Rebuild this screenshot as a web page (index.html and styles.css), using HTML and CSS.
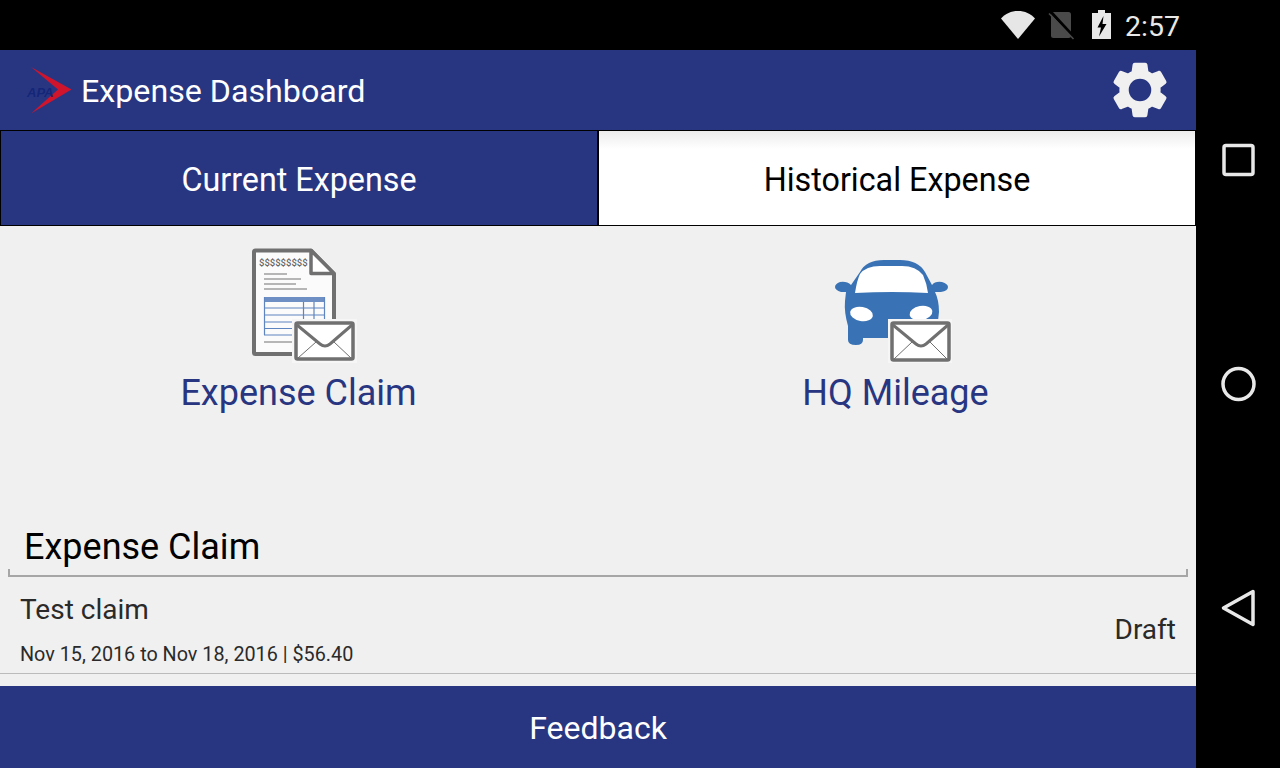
FILE: index.html
```html
<!DOCTYPE html>
<html>
<head>
    <title>Expense Dashboard</title>
    <link rel="stylesheet" href="styles.css">
</head>
<body>
    <div class="device">
        <div class="status-bar">
            <svg class="status-icons" width="112" height="34" viewBox="1000 8 112 34">
                <path d="M1001 18.500C1005.500 13.500 1011 11 1018 11S1030.500 13.500 1035 18.500L1018 39Z" fill="#e6e6e6"/>
                <rect x="1051" y="12" width="20" height="26" rx="2.500" fill="#4a4a4a"/>
                <path d="M1050 11L1074 37" stroke="#000" stroke-width="3" fill="none"/>
                <path d="M1049 13.500L1073.500 39" stroke="#4a4a4a" stroke-width="1.500" fill="none"/>
                <path d="M1098 10H1105V13H1111V39H1092V13H1098Z" fill="#e8e8e8"/>
                <path d="M1103.500 16L1097.500 27.500H1101L1099 36.500L1106.500 24H1102.500Z" fill="#000"/>
            </svg>
            <span class="clock">2:57</span>
        </div>

        <div class="app">
            <header class="app-header">
                <svg class="logo" width="46" height="48" viewBox="26 66 46 48">
                    <path d="M31 67L71.500 89.500L31 113.500L58 89.500Z" fill="#d0142c"/>
                    <text x="27" y="97" class="logo-text">APA</text>
                </svg>
                <h1 class="app-title">Expense Dashboard</h1>
                <svg class="gear" width="66" height="66" viewBox="0 0 24 24">
                    <path fill-rule="evenodd" fill="#f0f0f0" stroke="#f0f0f0" stroke-width="0.600" d="M19.14,12.94c0.04-0.3,0.06-0.61,0.06-0.94c0-0.32-0.02-0.64-0.07-0.94l2.03-1.58c0.18-0.14,0.23-0.41,0.12-0.61l-1.92-3.32c-0.12-0.22-0.37-0.29-0.59-0.22l-2.39,0.96c-0.5-0.38-1.03-0.7-1.62-0.94L14.4,2.81c-0.04-0.24-0.24-0.41-0.48-0.41h-3.84c-0.24,0-0.43,0.17-0.47,0.41L9.25,5.35C8.66,5.59,8.12,5.92,7.63,6.29L5.24,5.33c-0.22-0.08-0.47,0-0.59,0.22L2.74,8.87C2.62,9.08,2.66,9.34,2.86,9.48l2.03,1.58C4.84,11.36,4.8,11.69,4.8,12s0.02,0.64,0.07,0.94l-2.03,1.58c-0.18,0.14-0.23,0.41-0.12,0.61l1.92,3.32c0.12,0.22,0.37,0.29,0.59,0.22l2.39-0.96c0.5,0.38,1.03,0.7,1.62,0.94l0.36,2.54c0.05,0.24,0.24,0.41,0.48,0.41h3.84c0.24,0,0.44-0.17,0.47-0.41l0.36-2.54c0.59-0.24,1.13-0.56,1.62-0.94l2.39,0.96c0.22,0.08,0.47,0,0.59-0.22l1.92-3.32c0.12-0.22,0.07-0.47-0.12-0.61L19.14,12.94z M12,16.400a4.400,4.400 0 1 1 0,-8.800a4.400,4.400 0 1 1 0,8.800z"/>
                </svg>
            </header>

            <div class="tabs">
                <div class="tab tab-active">Current Expense</div>
                <div class="tab tab-plain">Historical Expense</div>
            </div>

            <div class="actions">
                <div class="action">
                    <svg width="116" height="118" viewBox="240 246 116 118">
                        <path d="M254.500 250.500H310L333 274V352.500a1.500 1.500 0 0 1-1.500 1.500H254.500a1.500 1.500 0 0 1-1.500-1.500V252a1.500 1.500 0 0 1 1.500-1.500Z" fill="#fbfbfb" stroke="#707070" stroke-width="4" stroke-linejoin="round"/>
                        <path d="M310 250.500V273.500H333Z" fill="#fff" stroke="#707070" stroke-width="3.500" stroke-linejoin="round"/>
                        <text x="258" y="266" class="doc-money">$$$$$$$$$</text>
                        <path d="M263 274H286M263 279H300M263 284H295M263 289H306M263 342H296" stroke="#a0a0a0" stroke-width="1.500" fill="none"/>
                        <rect x="263" y="297" width="61" height="5" fill="#6d8fc4"/>
                        <path d="M263.500 297V335M302.500 302V335M313 302V335M323.500 297V335M263 308H324M263 315H324M263 322H324M263 328.500H324M263 335H324" stroke="#5f85c0" stroke-width="1.200" fill="none"/>
                        <g transform="translate(295 323)">
                            <rect x="-4" y="-4" width="65" height="44" fill="#f6f6f6"/>
                            <rect width="57" height="36" rx="1.500" fill="#fff" stroke="#707070" stroke-width="3.500"/>
                            <path d="M1 2L24 21Q29 25 34 21L56 2" fill="none" stroke="#707070" stroke-width="3"/>
                            <path d="M2 35L20 19M55 35L38 19" fill="none" stroke="#707070" stroke-width="1"/>
                        </g>
                    </svg>
                    <span class="action-label">Expense Claim</span>
                </div>
                <div class="action">
                    <svg width="122" height="118" viewBox="835 246 122 118">
                        <path d="M860 272Q866 260 884 260H900Q918 260 925 272L932 285Q935 281 942 282Q948 284 948 287Q948 291 941 292L935 292Q939 300 939 312L936 338H863V340Q863 345 856 345Q848 345 848 340V326Q844 312 845 301L846 292L841 292Q835 290 835 287Q835 284 840 282Q847 281 851 285Z" fill="#3a73b5"/>
                        <path d="M855 293Q857 280 860 274Q866 266 880 266H902Q916 266 923 275Q927 284 928 293Q892 291 855 293Z" fill="#fff"/>
                        <ellipse cx="861.500" cy="314" rx="11.500" ry="7" transform="rotate(10 861.500 314)" fill="#fff"/>
                        <ellipse cx="921" cy="313" rx="11.500" ry="7" transform="rotate(-10 921 313)" fill="#fff"/>
                        <g transform="translate(892 323)">
                            <rect x="-4" y="-4" width="64" height="44" fill="#f6f6f6"/>
                            <rect width="57" height="37" rx="1.500" fill="#fff" stroke="#707070" stroke-width="3.500"/>
                            <path d="M1 2L24 21Q29 25 34 21L56 2" fill="none" stroke="#707070" stroke-width="3"/>
                            <path d="M2 36L20 19M55 36L38 19" fill="none" stroke="#707070" stroke-width="1"/>
                        </g>
                    </svg>
                    <span class="action-label">HQ Mileage</span>
                </div>
            </div>

            <h2 class="section-title">Expense Claim</h2>
            <div class="section-rule"></div>

            <div class="claim-row">
                <div class="claim-info">
                    <div class="claim-name">Test claim</div>
                    <div class="claim-meta">Nov 15, 2016 to Nov 18, 2016 | $56.40</div>
                </div>
                <div class="claim-status">Draft</div>
            </div>

            <div class="feedback">Feedback</div>
        </div>

        <nav class="nav-bar">
            <div class="nav-item">
                <svg width="40" height="40" viewBox="0 0 40 40"><rect x="6" y="5.500" width="29" height="29" rx="2" fill="none" stroke="#e8e8e8" stroke-width="3.500"/></svg>
            </div>
            <div class="nav-item">
                <svg width="40" height="40" viewBox="0 0 40 40"><circle cx="20.500" cy="20" r="15.500" fill="none" stroke="#e8e8e8" stroke-width="3.500"/></svg>
            </div>
            <div class="nav-item">
                <svg width="40" height="40" viewBox="0 0 40 40"><path d="M35 3.500L5.500 20L35 36.500Z" fill="none" stroke="#e8e8e8" stroke-width="3.500" stroke-linejoin="round"/></svg>
            </div>
        </nav>
    </div>
</body>
</html>
```

FILE: styles.css
```css
html, body {
    margin: 0;
    padding: 0;
    background-color: #000;
}
body {
    font-family: Roboto, "Liberation Sans", sans-serif;
    overflow: hidden;
}
.device {
    display: grid;
    grid-template-columns: 1196px 84px;
    grid-template-rows: 50px 718px;
    width: 1280px;
    height: 768px;
}
.status-bar {
    display: flex;
    align-items: center;
    justify-content: flex-end;
    padding-right: 16px;
    color: #e8e8e8;
}
.clock {
    margin-left: 13px;
    margin-top: 2px;
    font-size: 28.500px;
}
.app {
    display: flex;
    flex-direction: column;
    background-color: #f0f0f0;
}
.app-header {
    display: flex;
    align-items: center;
    height: 80px;
    flex: none;
    padding-left: 26px;
    padding-right: 23.500px;
    background-color: #283682;
}
.logo-text {
    font-family: "Liberation Sans", sans-serif;
    font-size: 13px;
    font-style: italic;
    font-weight: bold;
    fill: #142678;
}
.app-title {
    margin: 2px 0 0 9px;
    font-size: 32.200px;
    font-weight: 400;
    color: #fff;
}
.gear {
    margin-left: auto;
}
.tabs {
    display: flex;
    height: 96px;
    flex: none;
}
.tab {
    display: flex;
    align-items: center;
    justify-content: center;
    width: 598px;
    box-sizing: border-box;
    border: 1px solid #000;
    padding-top: 4px;
    font-size: 32.300px;
}
.tab-active {
    background-color: #283682;
    color: #fff;
}
.tab-plain {
    background: linear-gradient(#ececec, #fff 18px);
    color: #000;
}
.actions {
    display: grid;
    grid-template-columns: 1fr 1fr;
    padding: 20px 2px 0 0;
}
.action {
    display: flex;
    flex-direction: column;
    align-items: center;
}
.action-label {
    padding-top: 1px;
    font-size: 36px;
    line-height: 56px;
    color: #283682;
}
.section-title {
    margin: 102px 0 0 24px;
    padding-top: 1px;
    font-size: 36px;
    font-weight: 400;
    line-height: 46px;
    height: 46px;
    box-sizing: border-box;
    color: #000;
}
.section-rule {
    height: 6px;
    margin: 0 8px;
    border: 2px solid #a6a6a6;
    border-top: none;
}
.claim-row {
    display: flex;
    align-items: center;
    justify-content: space-between;
    height: 96px;
    flex: none;
    padding: 0 20px;
    border-bottom: 1px solid #bbb;
}
.claim-info {
    padding-top: 8px;
}
.claim-name {
    margin-bottom: 17px;
    font-size: 28px;
    color: #2a2a2a;
}
.claim-meta {
    font-size: 19.800px;
    color: #2a2a2a;
}
.claim-status {
    padding-top: 8px;
    font-size: 28px;
    color: #2a2a2a;
}
.feedback {
    display: flex;
    align-items: center;
    justify-content: center;
    height: 82px;
    margin-top: auto;
    padding-top: 1px;
    box-sizing: border-box;
    background-color: #283682;
    color: #fff;
    font-size: 32px;
}
.nav-bar {
    grid-column: 2;
    grid-row: 1 / span 2;
    display: grid;
    grid-auto-rows: 224px;
    align-content: center;
}
.nav-item {
    display: flex;
    align-items: center;
    justify-content: center;
}
.doc-money {
    font-family: "Roboto", sans-serif;
    font-size: 9.500px;
    font-weight: 500;
    fill: #666;
}
```
